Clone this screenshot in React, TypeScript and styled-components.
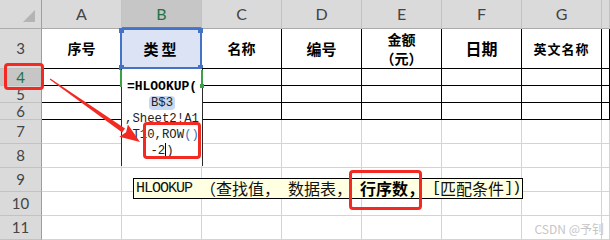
import React from "react";
import styled, { createGlobalStyle } from "styled-components";

const GlobalStyle = createGlobalStyle`
  html, body { margin: 0; padding: 0; background: #fff; overflow: hidden; }
  #root { width: 610px; height: 240px; }
`;

const RED = "#f22a22";

const Sheet = styled.div`
  position: relative;
  width: 610px;
  height: 240px;
  overflow: hidden;
  display: grid;
  grid-template-columns: 42px repeat(7, 80px) 1fr;
  grid-template-rows: 29px 40px 17px 17px 17px repeat(5, 24px);
  background: #fff;
  font-family: "Noto Sans CJK SC", sans-serif;
`;

const Corner = styled.div`
  box-sizing: border-box;
  background: #dadada;
  border-right: 1px solid #9e9e9e;
  border-bottom: 1px solid #ababab;
  display: flex;
  justify-content: flex-end;
  align-items: flex-end;
  padding: 0 6px 6px 0;
`;

const CornerMark = styled.div`
  width: 0;
  height: 0;
  border-left: 12px solid transparent;
  border-bottom: 12px solid #b4b4b4;
`;

const ColHeader = styled.div<{ $active?: boolean }>`
  box-sizing: border-box;
  background: ${(p) => (p.$active ? "#c6c6c6" : "#dadada")};
  border-right: 1px solid #c2c2c2;
  border-bottom: ${(p) => (p.$active ? "2px solid #3f9f48" : "1px solid #ababab")};
  display: flex;
  align-items: center;
  justify-content: center;
  padding-bottom: ${(p) => (p.$active ? "0" : "1px")};
  font-family: Lato, "Open Sans", sans-serif;
  font-size: 16px;
  color: ${(p) => (p.$active ? "#217346" : "#444")};
`;

const RowHeader = styled.div<{ $active?: boolean }>`
  box-sizing: border-box;
  background: ${(p) => (p.$active ? "#c6c6c6" : "#dadada")};
  border-right: 1px solid #9e9e9e;
  border-bottom: 1px solid #c2c2c2;
  display: flex;
  align-items: center;
  justify-content: center;
  overflow: hidden;
  font-family: Lato, "Open Sans", sans-serif;
  font-size: 15px;
  line-height: 15px;
  color: ${(p) => (p.$active ? "#217346" : "#444")};
`;

const Cell = styled.div<{ $ink?: boolean }>`
  box-sizing: border-box;
  border-right: 1px solid ${(p) => (p.$ink ? "#000" : "#d4d4d4")};
  border-bottom: 1px solid ${(p) => (p.$ink ? "#000" : "#d4d4d4")};
`;

const HeadCell = styled(Cell)<{ $size: number; $spacing?: number; $selected?: boolean }>`
  position: relative;
  display: flex;
  flex-direction: column;
  align-items: center;
  justify-content: center;
  background: ${(p) => (p.$selected ? "#dbe3f4" : "transparent")};
  font-family: "Noto Sans CJK SC", sans-serif;
  font-weight: 700;
  font-size: ${(p) => p.$size}px;
  letter-spacing: ${(p) => p.$spacing ?? 0}px;
  line-height: 19px;
  color: #000;
  white-space: nowrap;
`;

const SelectionFrame = styled.div`
  position: absolute;
  top: -1px;
  left: -2px;
  right: -1px;
  bottom: -1px;
  border: 2px solid #4472c4;
  pointer-events: none;
`;

const Handle = styled.div<{ $top?: boolean; $left?: boolean }>`
  position: absolute;
  width: 5px;
  height: 5px;
  background: #4472c4;
  ${(p) => (p.$top ? "top: -2px;" : "bottom: -3px;")}
  ${(p) => (p.$left ? "left: -3px;" : "right: -3px;")}
`;

const Editor = styled.div`
  position: absolute;
  left: 121px;
  top: 69px;
  width: 82px;
  height: 97px;
  box-sizing: border-box;
  background: #fff;
  border-left: 1px solid #2a2a2a;
  border-right: 1px solid #2a2a2a;
  display: flex;
  flex-direction: column;
  align-items: center;
  padding-top: 10px;
  font-family: "Liberation Mono", monospace;
  font-size: 12.3px;
  line-height: 16px;
  color: #111;
  white-space: pre;
`;

const EditLine = styled.div<{ $bold?: boolean }>`
  font-weight: ${(p) => (p.$bold ? 700 : 400)};
  font-size: ${(p) => (p.$bold ? "13px" : "inherit")};
  color: ${(p) => (p.$bold ? "#000" : "#222")};
`;

const RefMark = styled.span`
  background: #c9d7ef;
  border-radius: 4px;
  padding: 0 2px;
`;

const Paren = styled.span`
  color: #4472c4;
`;

const Caret = styled.span`
  display: inline-block;
  width: 1px;
  height: 13px;
  background: #000;
  vertical-align: -2px;
`;

const GreenEdge = styled.div<{ $x: number }>`
  position: absolute;
  left: ${(p) => p.$x}px;
  top: 70px;
  width: 2px;
  height: 17px;
  background: #3f9f48;
`;

const GreenKnob = styled.div`
  position: absolute;
  left: 200px;
  top: 84px;
  width: 4px;
  height: 4px;
  background: #3f9f48;
`;

const RedFrame = styled.div<{ $x: number; $y: number; $w: number; $h: number }>`
  position: absolute;
  left: ${(p) => p.$x}px;
  top: ${(p) => p.$y}px;
  width: ${(p) => p.$w}px;
  height: ${(p) => p.$h}px;
  box-sizing: border-box;
  border: 3px solid ${RED};
  border-radius: 4px;
  pointer-events: none;
`;

const Tip = styled.div`
  position: absolute;
  left: 133px;
  top: 178px;
  width: 390px;
  height: 21px;
  box-sizing: border-box;
  border: 1px solid #000;
  background: #ffffe1;
  display: flex;
  align-items: center;
  padding-left: 2px;
  font-family: "Noto Sans CJK SC", sans-serif;
  font-size: 16px;
  line-height: 19px;
  color: #111;
  white-space: pre;
`;

const TipAscii = styled.span`
  font-family: "Liberation Mono", monospace;
  font-size: 15px;
  letter-spacing: -1px;
`;

const TipBold = styled.span`
  font-weight: 700;
  color: #000;
`;

const Watermark = styled.div`
  position: absolute;
  right: 6px;
  bottom: 4px;
  font-family: "Noto Sans CJK SC", sans-serif;
  font-size: 12px;
  line-height: 14px;
  color: #c6c6c6;
`;

const ArrowLayer = styled.svg`
  position: absolute;
  left: 0;
  top: 0;
  pointer-events: none;
`;

const columns = ["A", "B", "C", "D", "E", "F", "G", ""];

const heads: { lines: string[]; size: number; spacing?: number }[] = [
  { lines: ["序号"], size: 14 },
  { lines: ["类型"], size: 15, spacing: 3 },
  { lines: ["名称"], size: 14 },
  { lines: ["编号"], size: 15 },
  { lines: ["金额", "（元）"], size: 14 },
  { lines: ["日期"], size: 16 },
  { lines: ["英文名称"], size: 13, spacing: 1 },
  { lines: [""], size: 14 },
];

const bodyRows = [4, 5, 6, 7, 8, 9, 10, 11];

function Arrow() {
  const sx = 50, sy = 79, tx = 140, ty = 142;
  const dx = tx - sx, dy = ty - sy;
  const len = Math.hypot(dx, dy);
  const ux = dx / len, uy = dy / len;
  const nx = -uy, ny = ux;
  const headLen = 20, headHalf = 7.5;
  const bx = tx - ux * headLen, by = ty - uy * headLen;
  const p = (x: number, y: number) => `${x.toFixed(1)},${y.toFixed(1)}`;
  const shaft = [
    p(sx + nx * 0.5, sy + ny * 0.5),
    p(bx + nx * 2.5, by + ny * 2.5),
    p(bx - nx * 2.5, by - ny * 2.5),
    p(sx - nx * 0.5, sy - ny * 0.5),
  ].join(" ");
  const head = [
    p(tx, ty),
    p(bx + nx * headHalf, by + ny * headHalf),
    p(bx + ux * 3, by + uy * 3),
    p(bx - nx * headHalf, by - ny * headHalf),
  ].join(" ");
  return (
    <ArrowLayer width={610} height={240} viewBox="0 0 610 240">
      <polygon points={shaft} fill={RED} />
      <polygon points={head} fill={RED} />
    </ArrowLayer>
  );
}

export default function App() {
  return (
    <>
      <GlobalStyle />
      <Sheet>
        <Corner>
          <CornerMark />
        </Corner>
        {columns.map((c, i) => (
          <ColHeader key={`h${i}`} $active={c === "B"}>
            {c}
          </ColHeader>
        ))}

        <RowHeader>3</RowHeader>
        {heads.map((h, i) => (
          <HeadCell key={`t${i}`} $ink $size={h.size} $spacing={h.spacing} $selected={i === 1}>
            {h.lines.map((l, j) => (
              <span key={j}>{l}</span>
            ))}
            {i === 1 && (
              <SelectionFrame>
                <Handle $top $left />
                <Handle $top />
                <Handle $left />
                <Handle />
              </SelectionFrame>
            )}
          </HeadCell>
        ))}

        {bodyRows.map((r) => (
          <React.Fragment key={`r${r}`}>
            <RowHeader $active={r === 4}>{r}</RowHeader>
            {columns.map((_, i) => (
              <Cell key={`c${r}-${i}`} $ink={r <= 6} />
            ))}
          </React.Fragment>
        ))}

        <Editor>
          <EditLine $bold>=HLOOKUP(</EditLine>
          <EditLine>
            <RefMark>B$3</RefMark>
          </EditLine>
          <EditLine>,Sheet2!A1</EditLine>
          <EditLine>
            :T10,ROW<Paren>()</Paren>
          </EditLine>
          <EditLine>
            -2<Caret />)
          </EditLine>
        </Editor>
        <GreenEdge $x={120} />
        <GreenEdge $x={201} />
        <GreenKnob />

        <Tip>
          <TipAscii>HLOOKUP </TipAscii>（查找值，<TipAscii> </TipAscii>数据表，<TipAscii> </TipAscii>
          <TipBold>行序数，</TipBold>
          <TipAscii> [</TipAscii>匹配条件<TipAscii>])</TipAscii>
        </Tip>

        <RedFrame $x={4} $y={63} $w={40} $h={27} />
        <RedFrame $x={143} $y={122} $w={58} $h={37} />
        <RedFrame $x={349} $y={170} $w={73} $h={40} />
        <Arrow />

        <Watermark>CSDN @予钊</Watermark>
      </Sheet>
    </>
  );
}
